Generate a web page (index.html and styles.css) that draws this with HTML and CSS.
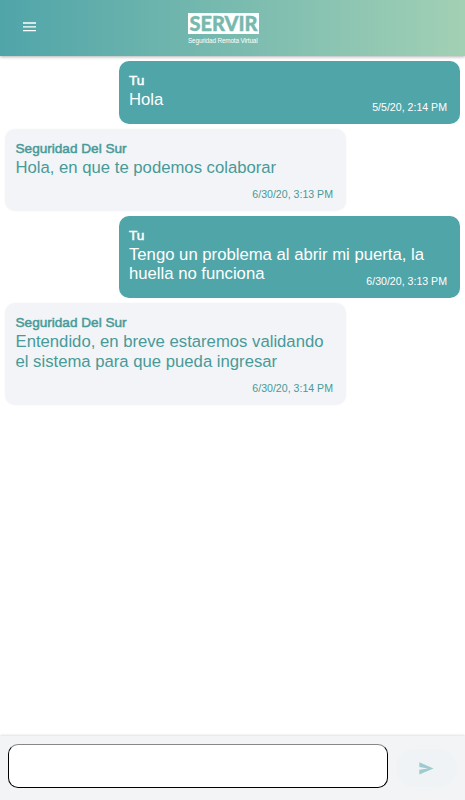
FILE: index.html
```
<!DOCTYPE html>
<html lang="es">
<head>
    <meta charset="UTF-8">
    <meta name="viewport" content="width=device-width, initial-scale=1.0">
    <title>Servir - Chat</title>
    <link rel="stylesheet" href="styles.css">
</head>
<body>

    <header class="header">
        <button class="menu-button" aria-label="Menu">
            <svg width="13" height="10" viewBox="0 0 13 10">
                <path d="M0 1h13M0 4.8h13M0 8.6h13" stroke="#fff" stroke-width="1.3"/>
            </svg>
        </button>
        <div class="logo">
            <div class="logo-name"><span>SERVIR</span></div>
            <div class="logo-text">Seguridad Remota Virtual</div>
        </div>
    </header>

    <main class="messages">
        <div class="message sent">
            <div class="name">Tu</div>
            <div class="text">Hola</div>
            <div class="time">5/5/20, 2:14 PM</div>
        </div>
        <div class="message received">
            <div class="name">Seguridad Del Sur</div>
            <div class="text">Hola, en que te podemos colaborar</div>
            <div class="time">6/30/20, 3:13 PM</div>
        </div>
        <div class="message sent">
            <div class="name">Tu</div>
            <div class="text">Tengo un problema al abrir mi puerta, la<br>huella no funciona</div>
            <div class="time">6/30/20, 3:13 PM</div>
        </div>
        <div class="message received">
            <div class="name">Seguridad Del Sur</div>
            <div class="text">Entendido, en breve estaremos validando<br>el sistema para que pueda ingresar</div>
            <div class="time">6/30/20, 3:14 PM</div>
        </div>
    </main>

    <footer class="footer">
        <input class="message-input" type="text" aria-label="Mensaje">
        <button class="send-button" aria-label="Enviar">
            <svg width="15" height="13" viewBox="0 0 15 13">
                <path d="M0.3 0.3L14.5 6.4L0.3 12.6V7.7L9 6.4L0.3 5.1z" fill="#9dcbcf"/>
            </svg>
        </button>
    </footer>

</body>
</html>
```
FILE: styles.css
```
* {
    box-sizing: border-box;
}

body {
    font-family: "Liberation Sans", Arial, sans-serif;
    margin: 0;
    height: 100vh;
    display: flex;
    flex-direction: column;
    background-color: #fff;
    overflow: hidden;
}

.header {
    height: 56px;
    flex-shrink: 0;
    display: grid;
    grid-template-columns: 58px 1fr 76px;
    background: linear-gradient(to right, #50a5a9, #a2d0b5);
    box-shadow: 0 1px 3px rgba(0, 0, 0, 0.3);
}

.menu-button {
    padding: 0;
    border: none;
    background: none;
    display: flex;
    align-items: center;
    justify-content: center;
    cursor: pointer;
}

.menu-button svg {
    margin-top: -2px;
}

.logo {
    width: 72px;
    margin: 13px 0 0 130px;
    color: #fff;
}

.logo-name {
    width: 71px;
    height: 21px;
    background-color: #fff;
    color: #78b9ae;
    font-family: Lato, sans-serif;
    font-size: 21.5px;
    font-weight: 900;
    line-height: 21px;
    text-align: center;
    white-space: nowrap;
    -webkit-text-stroke: 0.4px currentColor;
}

.logo-name span {
    display: block;
    transform: scaleX(0.93);
    margin: 0 -8px;
}

.logo-text {
    margin-top: 2px;
    font-size: 6.4px;
    line-height: 9px;
    letter-spacing: -0.15px;
    white-space: nowrap;
}

.messages {
    flex: 1;
    padding: 5px 5px 0;
    display: flex;
    flex-direction: column;
    gap: 4.5px;
}

.message {
    width: 341px;
    padding: 10px 13px 10px 10px;
    border-radius: 10px;
}

.sent {
    align-self: flex-end;
    background-color: #50a5a9;
    color: #fff;
}

.received {
    align-self: flex-start;
    padding-left: 10.5px;
    background-color: #f3f4f7;
    color: #489a99;
    box-shadow: 0 0 2px #f3f4f7;
}

.name {
    font-size: 13.6px;
    line-height: 19px;
    -webkit-text-stroke: 0.5px currentColor;
}

.text {
    font-size: 16.7px;
    line-height: 19.7px;
    white-space: nowrap;
}

.time {
    font-size: 10.6px;
    line-height: 14px;
    margin-top: 10px;
    text-align: right;
}

.sent .time {
    margin-top: -9.7px;
}

.footer {
    height: 64px;
    flex-shrink: 0;
    display: flex;
    gap: 8px;
    padding: 8px 8px 12px;
    background-color: #f2f4f6;
    box-shadow: 0 -1px 2px rgba(0, 0, 0, 0.12);
}

.message-input {
    width: 380px;
    height: 44px;
    padding: 0 12px;
    border: 1px solid #000;
    border-top-color: #888;
    border-radius: 10px;
    background-color: #fff;
    font-size: 16px;
    outline: none;
}

.send-button {
    flex: 1;
    height: 38px;
    margin-top: 5px;
    padding: 0;
    border: none;
    border-radius: 19px;
    background-color: #f0f3f5;
    display: flex;
    align-items: center;
    justify-content: center;
    cursor: pointer;
}
```
